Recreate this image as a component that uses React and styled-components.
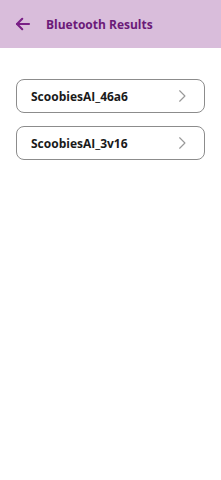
import styled, { createGlobalStyle } from 'styled-components';

const devices = ['ScoobiesAI_46a6', 'ScoobiesAI_3v16'];

function App() {
  return (
    <>
      <GlobalStyle />
      <Page>
        <Header>
          <BackButton aria-label="Back">
            <svg width="18" height="18" viewBox="0 0 24 24" fill="none" stroke="#7a1f86" strokeWidth="2.8" strokeLinecap="round" strokeLinejoin="round">
              <path d="M20 12H4" />
              <path d="M11 5l-7 7 7 7" />
            </svg>
          </BackButton>
          <Title>Bluetooth Results</Title>
        </Header>
        <List>
          {devices.map((name) => (
            <Card key={name}>
              <CardText>{name}</CardText>
              <svg width="14" height="14" viewBox="0 0 24 24" fill="none" stroke="#999" strokeWidth="2" strokeLinecap="round" strokeLinejoin="round">
                <path d="M8 3l9 9-9 9" />
              </svg>
            </Card>
          ))}
        </List>
      </Page>
    </>
  )
}

const GlobalStyle = createGlobalStyle`
  body {
    margin: 0;
    background: #fff;
    font-family: "Open Sans", "Noto Sans", sans-serif;
  }
`
const Page = styled.div`
  display: flex;
  flex-direction: column;
  min-height: 480px;
`
const Header = styled.div`
  display: flex;
  align-items: center;
  height: 48px;
  padding: 0 14px;
  background: #d9bddb;
  gap: 14px;
`
const BackButton = styled.div`
  display: flex;
  align-items: center;
`
const Title = styled.div`
  font-size: 12px;
  font-weight: 700;
  color: #6b1a78;
`
const List = styled.div`
  display: flex;
  flex-direction: column;
  gap: 13px;
  padding: 31px 16px 0;
`
const Card = styled.div`
  display: flex;
  align-items: center;
  justify-content: space-between;
  height: 34px;
  box-sizing: border-box;
  padding: 0 15px 0 14px;
  border: 1.5px solid #8c8c8c;
  border-radius: 8px;
`
const CardText = styled.div`
  font-size: 12px;
  font-weight: 700;
  color: #1a1a1a;
`

export default App
